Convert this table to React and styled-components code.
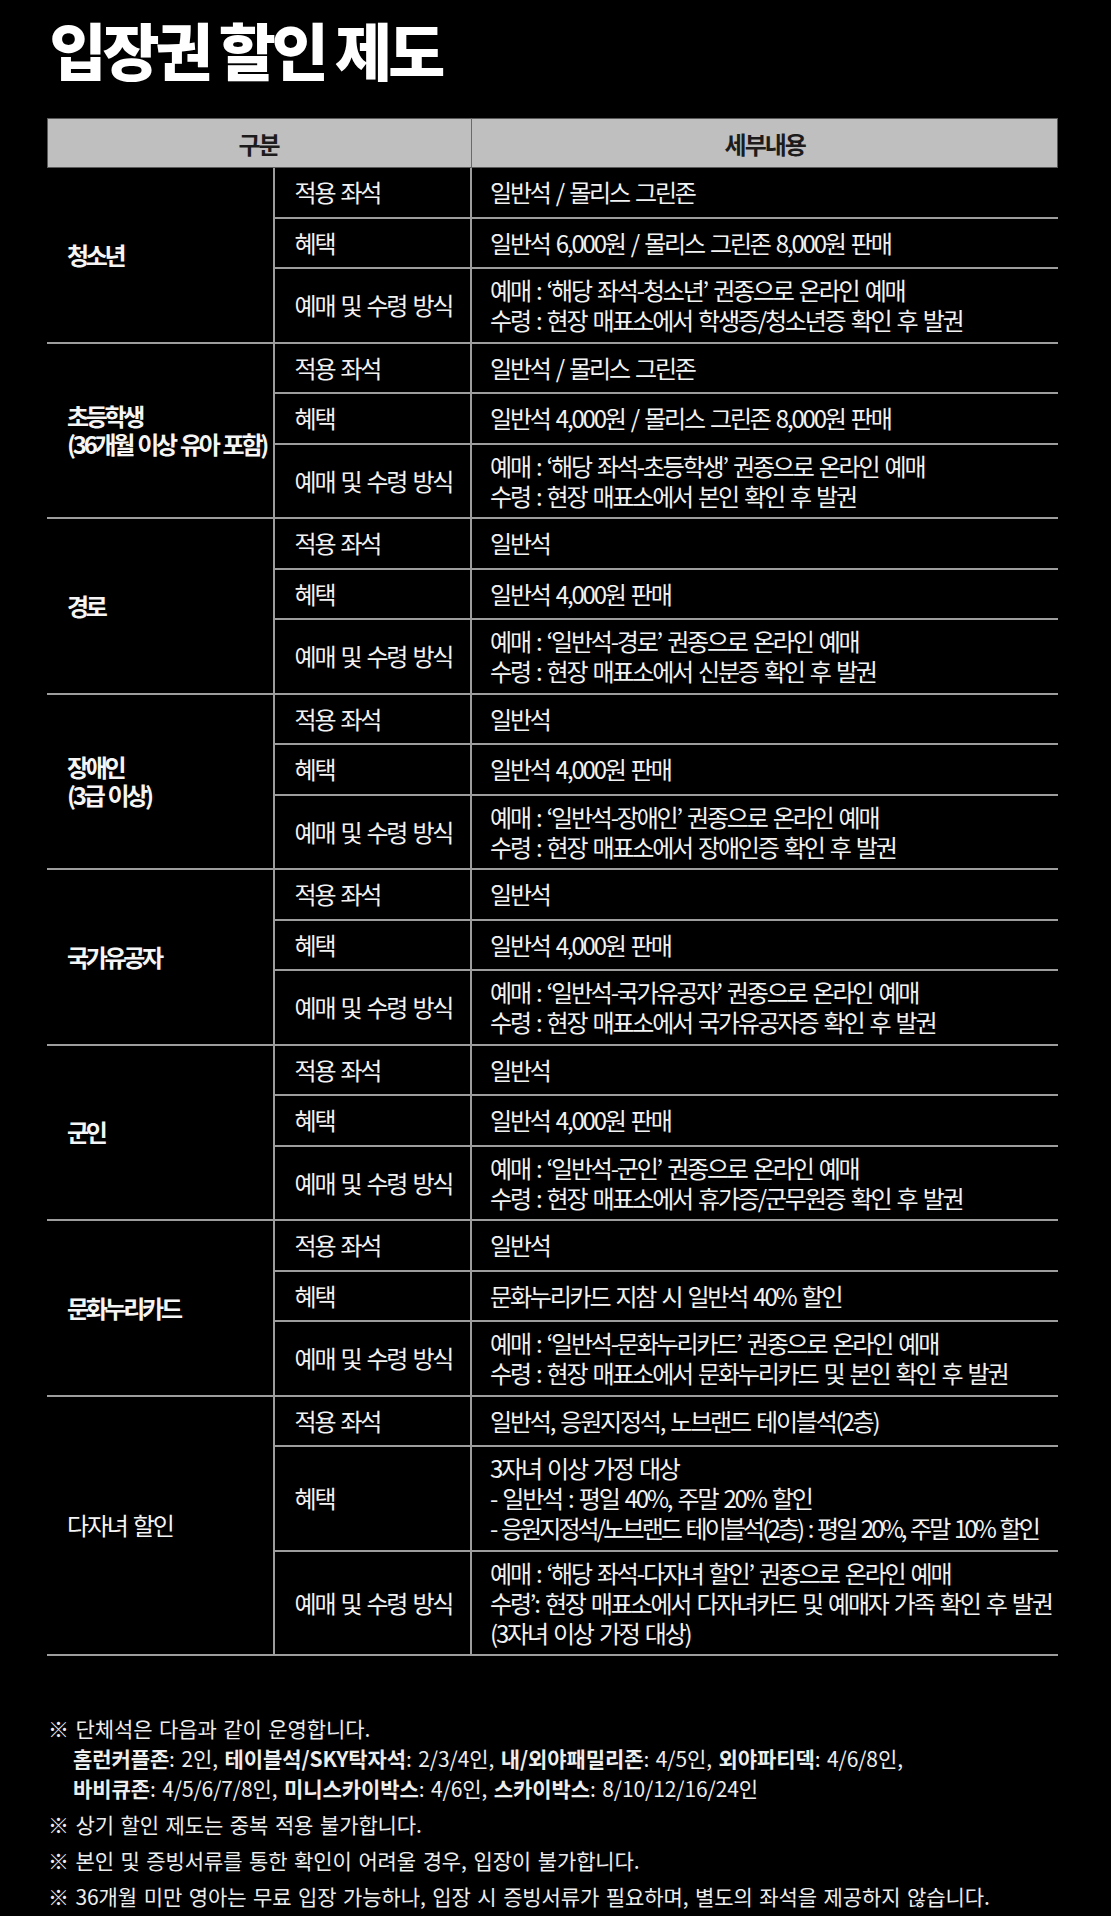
import React from "react";
import styled, { createGlobalStyle } from "styled-components";

const GlobalStyle = createGlobalStyle`
  html, body { margin: 0; padding: 0; background: #000; }
  body {
    font-family: "Noto Sans CJK KR", "Noto Sans", sans-serif;
    color: #f2f2f2;
  }
`;

const LINE = "#9d9d9d";

const Page = styled.div`
  width: 1111px;
  min-height: 1916px;
  box-sizing: border-box;
  padding: 18px 53px 0 46.5px;
  background: #000;
`;

const Title = styled.h1`
  margin: 0 0 38px 3px;
  font-size: 62px;
  line-height: 62px;
  font-weight: 900;
  letter-spacing: -4px;
  color: #fff;
`;

const Table = styled.div`
  width: 1011.5px;
  font-size: 24px;
  letter-spacing: -2.2px;
  word-spacing: 3px;
`;

const HeaderRow = styled.div`
  display: grid;
  grid-template-columns: 424px 1fr;
  height: 50px;
  background: #bfbfbf;
  box-shadow: inset 0 0 0 1px #5a5a5a;
`;

const HeaderCell = styled.div`
  display: flex;
  align-items: center;
  justify-content: center;
  color: #1c1c1c;
  font-weight: 700;
  letter-spacing: -2px;
  border-left: ${(p) => (p.$divider ? "1px solid #6a6a6a" : "none")};
`;

const Group = styled.div`
  display: grid;
  grid-template-columns: 228.5px 1fr;
  border-bottom: 2px solid ${LINE};
`;

const Label = styled.div`
  display: flex;
  flex-direction: column;
  justify-content: center;
  padding-left: 20.5px;
  border-right: 2px solid ${LINE};
  font-weight: ${(p) => (p.$bold ? 700 : 400)};
  letter-spacing: ${(p) => (p.$bold ? "-3.3px" : "-2.2px")};
  line-height: 28px;
  white-space: nowrap;
  color: #f5f5f5;
`;

const SubRows = styled.div`
  display: flex;
  flex-direction: column;
`;

const SubRow = styled.div`
  display: grid;
  grid-template-columns: 196.5px 1fr;
  & + & {
    border-top: 2px solid ${LINE};
  }
`;

const Key = styled.div`
  box-sizing: border-box;
  min-height: 48.5px;
  display: flex;
  align-items: center;
  padding: 6.25px 0 6.25px 19.5px;
  border-right: 2px solid ${LINE};
  line-height: 30px;
  white-space: nowrap;
`;

const Value = styled.div`
  box-sizing: border-box;
  min-height: 48.5px;
  display: flex;
  flex-direction: column;
  justify-content: center;
  padding: 6.25px 0 6.25px 18.5px;
  line-height: 30px;
`;

const Line = styled.span`
  white-space: nowrap;
  letter-spacing: ${(p) => (p.$tight ? "-2.9px" : "inherit")};
`;

const Notes = styled.div`
  margin: 57px 0 0 1.5px;
  font-size: 21px;
  letter-spacing: -0.1px;
  word-spacing: 2px;
  line-height: 30px;
  color: #ededed;
`;

const Note = styled.div`
  white-space: nowrap;
  & + & {
    margin-top: 6px;
  }
`;

const Indent = styled.div`
  padding-left: 25px;
`;

const B = styled.b`
  font-weight: 700;
`;

const T = (text) => ({ text, tight: true });

const groups = [
  {
    label: ["청소년"],
    bold: true,
    rows: [
      ["적용 좌석", ["일반석 / 몰리스 그린존"]],
      ["혜택", ["일반석 6,000원 / 몰리스 그린존 8,000원 판매"]],
      [
        "예매 및 수령 방식",
        [
          "예매 : ‘해당 좌석-청소년’ 권종으로 온라인 예매",
          "수령 : 현장 매표소에서 학생증/청소년증 확인 후 발권",
        ],
      ],
    ],
  },
  {
    label: ["초등학생", "(36개월 이상 유아 포함)"],
    bold: true,
    rows: [
      ["적용 좌석", ["일반석 / 몰리스 그린존"]],
      ["혜택", ["일반석 4,000원 / 몰리스 그린존 8,000원 판매"]],
      [
        "예매 및 수령 방식",
        [
          "예매 : ‘해당 좌석-초등학생’ 권종으로 온라인 예매",
          "수령 : 현장 매표소에서 본인 확인 후 발권",
        ],
      ],
    ],
  },
  {
    label: ["경로"],
    bold: true,
    rows: [
      ["적용 좌석", ["일반석"]],
      ["혜택", ["일반석 4,000원 판매"]],
      [
        "예매 및 수령 방식",
        [
          "예매 : ‘일반석-경로’ 권종으로 온라인 예매",
          "수령 : 현장 매표소에서 신분증 확인 후 발권",
        ],
      ],
    ],
  },
  {
    label: ["장애인", "(3급 이상)"],
    bold: true,
    rows: [
      ["적용 좌석", ["일반석"]],
      ["혜택", ["일반석 4,000원 판매"]],
      [
        "예매 및 수령 방식",
        [
          "예매 : ‘일반석-장애인’ 권종으로 온라인 예매",
          "수령 : 현장 매표소에서 장애인증 확인 후 발권",
        ],
      ],
    ],
  },
  {
    label: ["국가유공자"],
    bold: true,
    rows: [
      ["적용 좌석", ["일반석"]],
      ["혜택", ["일반석 4,000원 판매"]],
      [
        "예매 및 수령 방식",
        [
          "예매 : ‘일반석-국가유공자’ 권종으로 온라인 예매",
          "수령 : 현장 매표소에서 국가유공자증 확인 후 발권",
        ],
      ],
    ],
  },
  {
    label: ["군인"],
    bold: true,
    rows: [
      ["적용 좌석", ["일반석"]],
      ["혜택", ["일반석 4,000원 판매"]],
      [
        "예매 및 수령 방식",
        [
          "예매 : ‘일반석-군인’ 권종으로 온라인 예매",
          "수령 : 현장 매표소에서 휴가증/군무원증 확인 후 발권",
        ],
      ],
    ],
  },
  {
    label: ["문화누리카드"],
    bold: true,
    rows: [
      ["적용 좌석", ["일반석"]],
      ["혜택", ["문화누리카드 지참 시 일반석 40% 할인"]],
      [
        "예매 및 수령 방식",
        [
          "예매 : ‘일반석-문화누리카드’ 권종으로 온라인 예매",
          "수령 : 현장 매표소에서 문화누리카드 및 본인 확인 후 발권",
        ],
      ],
    ],
  },
  {
    label: ["다자녀 할인"],
    bold: false,
    rows: [
      ["적용 좌석", ["일반석, 응원지정석, 노브랜드 테이블석(2층)"]],
      [
        "혜택",
        [
          "3자녀 이상 가정 대상",
          "- 일반석 : 평일 40%, 주말 20% 할인",
          T("- 응원지정석/노브랜드 테이블석(2층) : 평일 20%, 주말 10% 할인"),
        ],
      ],
      [
        "예매 및 수령 방식",
        [
          "예매 : ‘해당 좌석-다자녀 할인’ 권종으로 온라인 예매",
          "수령’: 현장 매표소에서 다자녀카드 및 예매자 가족 확인 후 발권",
          "(3자녀 이상 가정 대상)",
        ],
      ],
    ],
  },
];

export default function App() {
  return (
    <>
      <GlobalStyle />
      <Page>
        <Title>입장권 할인 제도</Title>
        <Table>
          <HeaderRow>
            <HeaderCell>구분</HeaderCell>
            <HeaderCell $divider>세부내용</HeaderCell>
          </HeaderRow>
          {groups.map((g, gi) => (
            <Group key={gi}>
              <Label $bold={g.bold}>
                {g.label.map((l, i) => (
                  <span key={i}>{l}</span>
                ))}
              </Label>
              <SubRows>
                {g.rows.map(([k, vals], ri) => (
                  <SubRow key={ri}>
                    <Key>{k}</Key>
                    <Value>
                      {vals.map((v, vi) =>
                        typeof v === "string" ? (
                          <Line key={vi}>{v}</Line>
                        ) : (
                          <Line key={vi} $tight={v.tight}>
                            {v.text}
                          </Line>
                        )
                      )}
                    </Value>
                  </SubRow>
                ))}
              </SubRows>
            </Group>
          ))}
        </Table>
        <Notes>
          <Note>
            <div>※ 단체석은 다음과 같이 운영합니다.</div>
            <Indent>
              <B>홈런커플존</B>: 2인, <B>테이블석/SKY탁자석</B>: 2/3/4인,{" "}
              <B>내/외야패밀리존</B>: 4/5인, <B>외야파티덱</B>: 4/6/8인,
            </Indent>
            <Indent>
              <B>바비큐존</B>: 4/5/6/7/8인, <B>미니스카이박스</B>: 4/6인,{" "}
              <B>스카이박스</B>: 8/10/12/16/24인
            </Indent>
          </Note>
          <Note>※ 상기 할인 제도는 중복 적용 불가합니다.</Note>
          <Note>※ 본인 및 증빙서류를 통한 확인이 어려울 경우, 입장이 불가합니다.</Note>
          <Note>
            ※ 36개월 미만 영아는 무료 입장 가능하나, 입장 시 증빙서류가 필요하며, 별도의 좌석을
            제공하지 않습니다.
          </Note>
        </Notes>
      </Page>
    </>
  );
}
